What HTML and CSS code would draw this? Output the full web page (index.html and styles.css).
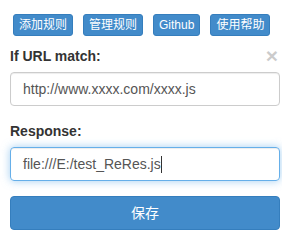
FILE: index.html
```html
<!DOCTYPE html>
<html lang="zh">
<head>
    <meta charset="UTF-8">
    <title>ReRes</title>
    <link rel="stylesheet" href="styles.css">
</head>
<body>
    <div class="wrap">
        <div class="toolbar">
            <a class="btn btn-xs" href="#">添加规则</a>
            <a class="btn btn-xs" href="#">管理规则</a>
            <a class="btn btn-xs" href="#">Github</a>
            <a class="btn btn-xs" href="#">使用帮助</a>
        </div>
        <div class="group">
            <div class="label-row">
                <label>If URL match:</label>
                <span class="close">&times;</span>
            </div>
            <div class="field">http://www.xxxx.com/xxxx.js</div>
        </div>
        <div class="group">
            <div class="label-row">
                <label>Response:</label>
            </div>
            <div class="field focus">file:///E:/test_ReRes.js<span class="caret"></span></div>
        </div>
        <a class="btn btn-block" href="#">保存</a>
    </div>
</body>
</html>
```

FILE: styles.css
```css
*{
    box-sizing: border-box;
}
body{
    margin: 0;
    background: #fff;
    font-family: "Liberation Sans", Arial, "Noto Sans CJK SC", sans-serif;
    font-size: 14px;
    color: #333;
}
.wrap{
    padding: 14px 2px 0 10px;
}
.toolbar{
    display: flex;
    gap: 10px;
    margin-left: 3px;
    margin-bottom: 10px;
}
.btn{
    display: block;
    background-color: #428bca;
    border: 1px solid #357ebd;
    color: #fff;
    text-decoration: none;
    text-align: center;
    border-radius: 3px;
}
.btn-xs{
    font-size: 12px;
    line-height: 18px;
    padding: 1px 5px;
}
.btn-block{
    height: 34px;
    line-height: 32px;
    font-size: 14px;
    border-radius: 4px;
}
.group{
    margin-bottom: 15px;
}
.label-row{
    display: flex;
    justify-content: space-between;
    align-items: center;
    height: 20px;
    margin-bottom: 6px;
}
label{
    font-weight: bold;
    font-size: 14px;
}
.close{
    font-size: 21px;
    font-weight: bold;
    color: #000;
    opacity: 0.2;
    line-height: 20px;
    margin-right: 2px;
}
.field{
    height: 34px;
    border: 1px solid #ccc;
    border-radius: 4px;
    padding: 0 12px;
    line-height: 32px;
    color: #555;
    box-shadow: inset 0 1px 1px rgba(0,0,0,0.075);
}
.field.focus{
    border-color: #66afe9;
    box-shadow: inset 0 1px 1px rgba(0,0,0,0.075), 0 0 8px rgba(102,175,233,0.6);
}
.caret{
    display: inline-block;
    width: 1px;
    height: 17px;
    background: #333;
    vertical-align: -4px;
}
```
